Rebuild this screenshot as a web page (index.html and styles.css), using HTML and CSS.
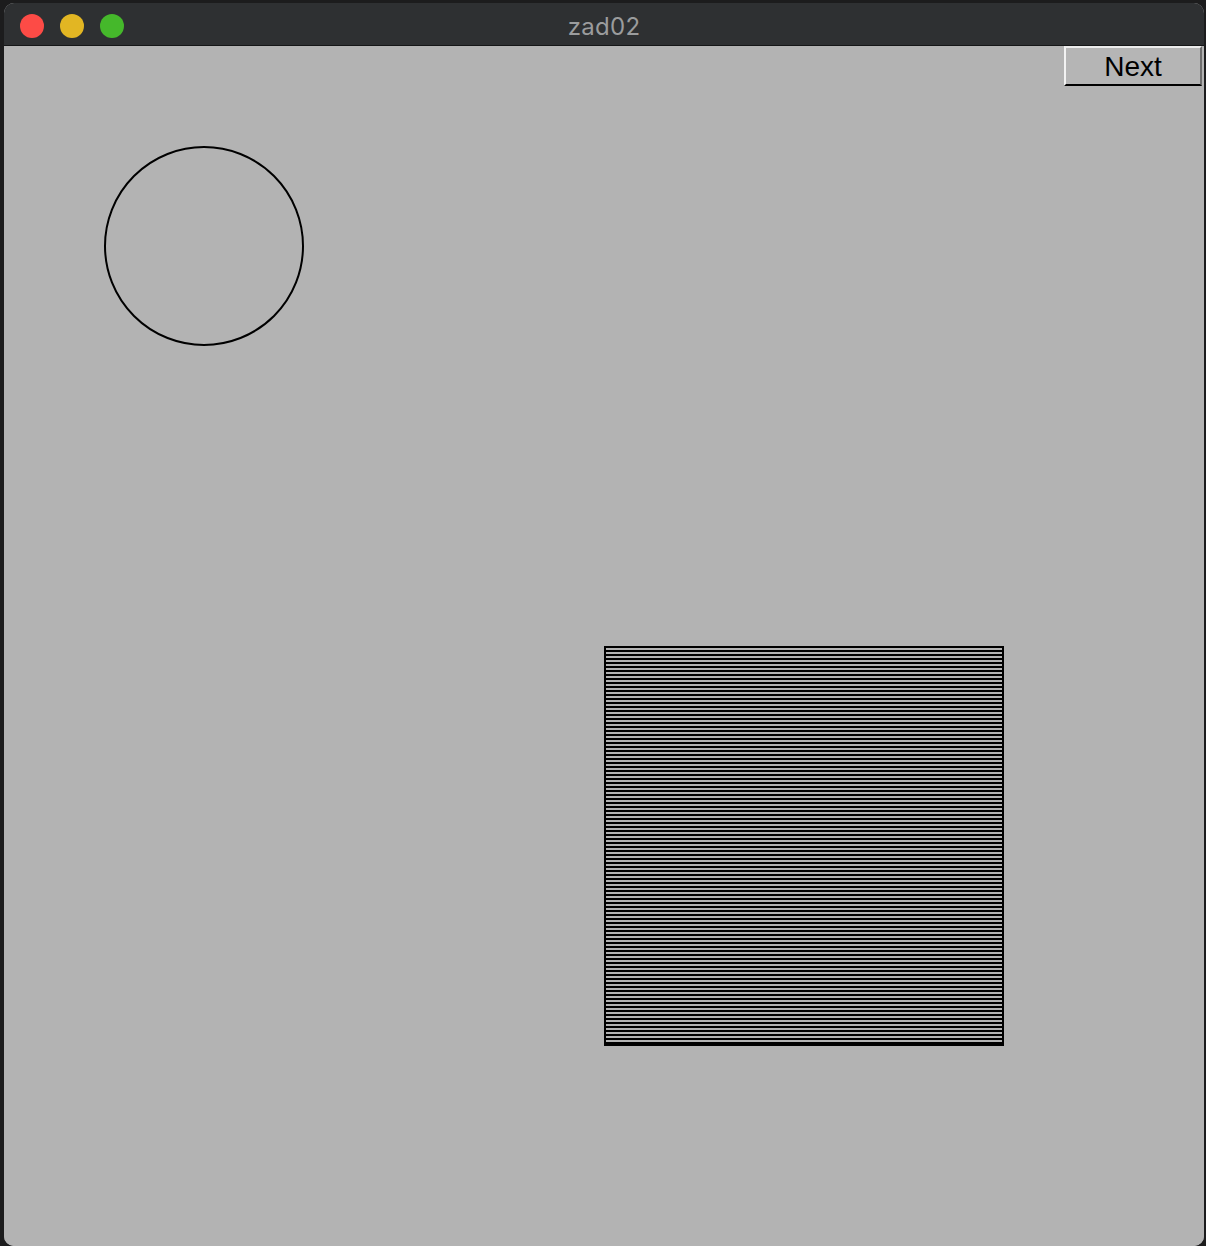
FILE: index.html
```html
<!DOCTYPE html>
<html>
<head>
<meta charset="utf-8">
<title>zad02</title>
<link rel="stylesheet" href="styles.css">
</head>
<body>
<div class="window">
  <div class="titlebar">
    <div class="lights">
      <span class="light red"></span>
      <span class="light yellow"></span>
      <span class="light green"></span>
    </div>
    <div class="title">zad02</div>
    <div class="spacer"></div>
  </div>
  <div class="canvas">
    <div class="toolbar">
      <button class="next">Next</button>
    </div>
    <div class="circle"></div>
    <div class="striped"></div>
  </div>
</div>
</body>
</html>
```
FILE: styles.css
```css
html, body {
  margin: 0;
  padding: 0;
  background: #1c1c1d;
  width: 1206px;
  height: 1246px;
  overflow: hidden;
}
.window {
  margin: 3px 0 0 4px;
  width: 1200px;
  height: 1243px;
  border-radius: 10px;
  overflow: hidden;
  background: #b3b3b3;
  display: flex;
  flex-direction: column;
}
.titlebar {
  height: 42px;
  background: #2e3032;
  border-bottom: 1px solid #151617;
  display: grid;
  grid-template-columns: 1fr auto 1fr;
  align-items: center;
  font-family: "Inter", "Noto Sans", sans-serif;
}
.lights {
  display: flex;
  gap: 16px;
  padding-left: 16px;
}
.light {
  width: 24px;
  height: 24px;
  border-radius: 50%;
  display: block;
}
.red { background: #fd4b46; }
.yellow { background: #e2b623; }
.green { background: #45b82b; }
.title {
  color: #9b9c9d;
  font-size: 24px;
  letter-spacing: 0.3px;
  line-height: 42px;
  padding-top: 3px;
}
.canvas {
  position: relative;
  flex: 1;
  background: #b3b3b3;
}
.toolbar {
  display: flex;
  justify-content: flex-end;
  padding-right: 2px;
}
.next {
  width: 138px;
  height: 40px;
  box-sizing: border-box;
  background: #b5b5b5;
  border-style: solid;
  border-width: 2px;
  border-color: #ececec #6e6e6e #000 #f2f2f2;
  font-family: "Liberation Sans", Arial, sans-serif;
  font-size: 28px;
  color: #000;
  padding: 0;
  line-height: 38px;
}
.circle {
  position: absolute;
  left: 100px;
  top: 100px;
  width: 200px;
  height: 200px;
  box-sizing: border-box;
  border: 2px solid #000;
  border-radius: 50%;
}
.striped {
  position: absolute;
  left: 600px;
  top: 600px;
  width: 400px;
  height: 400px;
  box-sizing: border-box;
  border: 2px solid #000;
  border-bottom-width: 4px;
  background: repeating-linear-gradient(to bottom, #b3b3b3 0 2px, #000 2px 4px);
}
```
